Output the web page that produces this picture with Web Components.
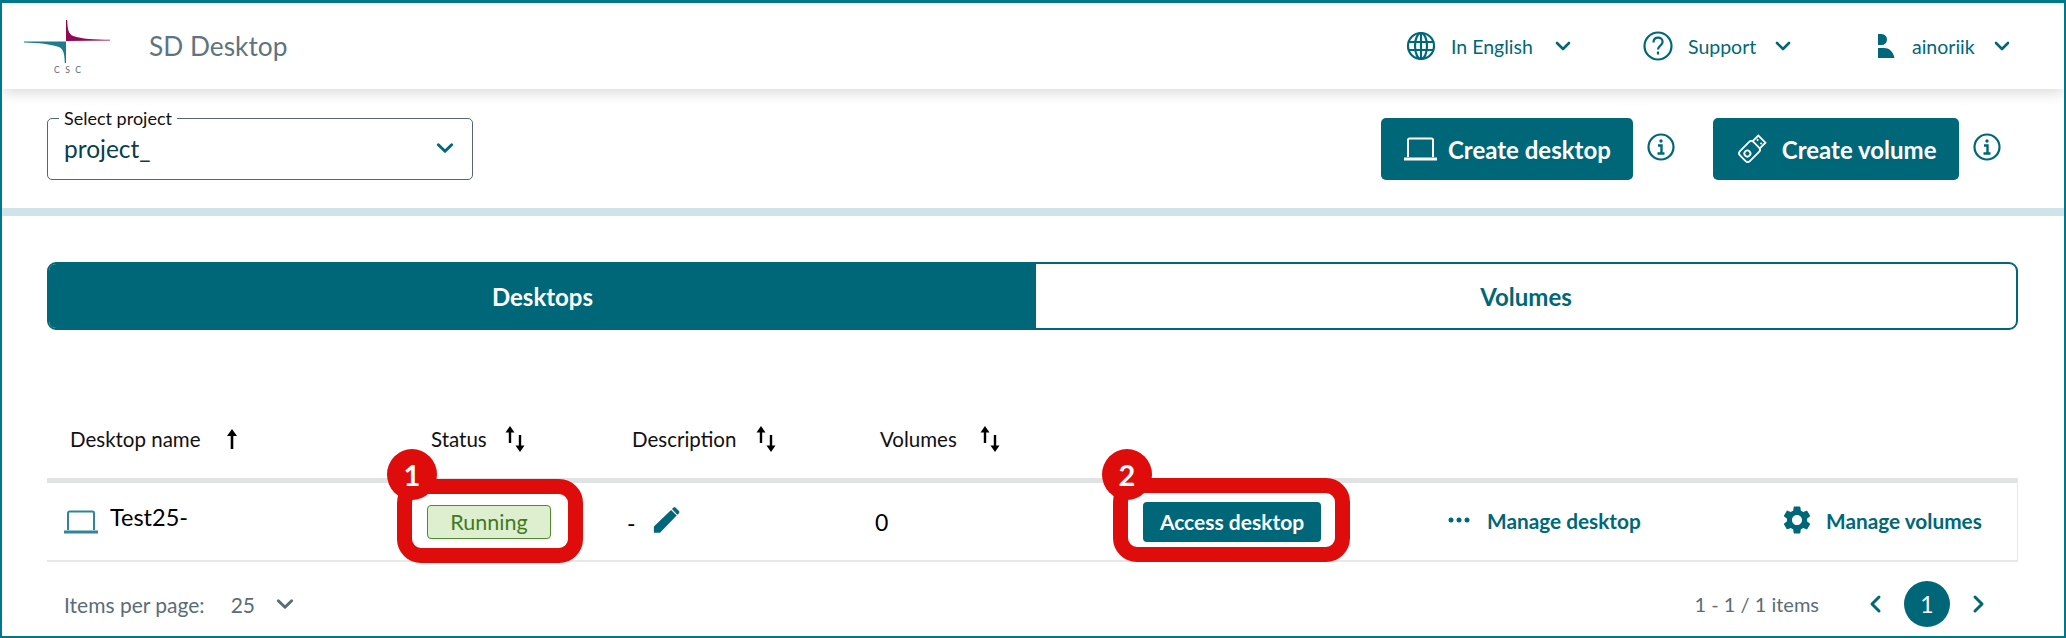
<!DOCTYPE html>
<html lang="en">
<head>
<meta charset="utf-8">
<title>SD Desktop</title>
<style>
    html, body { margin: 0; padding: 0; background: #fff; }
    body { font-family: Lato, "Liberation Sans", sans-serif; }
</style>
</head>
<body>
<sd-frame>
    <sd-header>
        <nav-item width="237" chev="21">
            <svg slot="icon" width="30" height="30" viewBox="0 0 30 30" fill="none" stroke="currentColor" stroke-width="2.2"><circle cx="15" cy="15" r="13"/><ellipse cx="15" cy="15" rx="6" ry="13"/><path d="M15 2v26M2.5 11h25M2.5 19h25"/></svg>
            In English
        </nav-item>
        <nav-item width="235">
            <svg slot="icon" width="30" height="30" viewBox="0 0 30 30" fill="none" stroke="currentColor" stroke-width="2.2"><circle cx="15" cy="15" r="13.5"/><path d="M10.5 11.5c0-3 2-4.800 4.600-4.800s4.500 1.700 4.500 4.200c0 3.600-4.600 3.800-4.600 7.600"/><path d="M15 20.500v3"/></svg>
            Support
        </nav-item>
        <nav-item width="139" gap="17">
            <svg slot="icon" width="17" height="24" viewBox="0 0 17 24" fill="currentColor"><path d="M0 0h3.500a5.500 5.500 0 0 1 0 11H0zM0 14h6c5 0 9 3 10.500 10H0z"/></svg>
            ainoriik
        </nav-item>
    </sd-header>

    <sd-toolbar>
        <project-select label="Select project" value="project_"></project-select>
        <action-button gap="11">
            <svg slot="icon" width="33" height="24" viewBox="0 0 33 24" fill="none" stroke="#fff" stroke-width="2"><path d="M4 20V3a1.500 1.500 0 0 1 1.500-1.500h22A1.500 1.500 0 0 1 29 3v17"/><path d="M0 22h33" stroke-width="3"/></svg>
            Create desktop
        </action-button>
        <info-dot></info-dot>
        <action-button gap="14" style="margin-left:38px">
            <svg slot="icon" width="32" height="34" viewBox="0 0 32 34" fill="none" stroke="#fff" stroke-width="1.800"><g transform="rotate(-45 16 17)"><rect x="3" y="10" width="19" height="14" rx="3"/><path d="M22 12h8v10h-8"/><path d="M25.500 14.500h1.800M25.500 19.500h1.800"/><circle cx="9.500" cy="17" r="3"/></g></svg>
            Create volume
        </action-button>
        <info-dot></info-dot>
    </sd-toolbar>

    <tab-bar></tab-bar>

    <desktop-table>
        <desktop-row>
            <cell-name slot="name">Test25-</cell-name>
            <call-out slot="status" number="1" box-left="-30" box-top="-26" box-width="186" num-left="-40" num-top="-56"><status-badge>Running</status-badge></call-out>
            <cell-description slot="description">-</cell-description>
            <span slot="volumes">0</span>
            <call-out slot="access" number="2" box-left="-30" box-top="-24" box-width="237" num-left="-41" num-top="-53"><access-button>Access desktop</access-button></call-out>
            <row-link slot="manage" kind="dots">Manage desktop</row-link>
            <row-link slot="manage-volumes" kind="gear">Manage volumes</row-link>
        </desktop-row>
    </desktop-table>

    <table-pager></table-pager>
</sd-frame>

<script>
    const chevron = (size, color) => `<svg width="${size}" height="${size}" viewBox="0 0 18 18" fill="none" stroke="${color || "currentColor"}" stroke-width="2.600" stroke-linecap="round" stroke-linejoin="round"><path d="M3 6l6 6 6-6"/></svg>`;

    // shared base: clones the template of the subclass into an open shadow root
    class ShadowElement extends HTMLElement {
        constructor() {
            super();
            const template = document.createElement("template");
            template.innerHTML = this.render();
            this.attachShadow({ mode: "open" }).appendChild(template.content.cloneNode(true));
        }
        render() { return ""; }
    }

    class SdFrame extends ShadowElement {
        render() {
            return `<style>
                :host {
                    display: flex;
                    flex-direction: column;
                    box-sizing: border-box;
                    width: 2066px;
                    height: 638px;
                    overflow: hidden;
                    border: 2px solid #00778a;
                    border-top-width: 3px;
                    background: #fff;
                    color: #000;
                    font-family: Lato, "Liberation Sans", sans-serif;
                }
            </style><slot></slot>`;
        }
    }

    class SdHeader extends ShadowElement {
        render() {
            return `<style>
                :host {
                    display: flex;
                    align-items: center;
                    flex: none;
                    height: 86px;
                    padding-left: 22px;
                    box-shadow: 0 3px 14px rgba(0,0,0,.16);
                    position: relative;
                    z-index: 2;
                    background: #fff;
                }
                svg { flex: none; }
                .logo { margin-top: 8px; }
                .title { margin-left: 39px; font-size: 26.300px; color: #5e7480; flex: 1; }
                .nav { display: flex; align-items: center; padding-right: 47px; }
            </style>
            <svg class="logo" width="86" height="60" viewBox="0 0 86 60">
                <path fill="#8e0a55" d="M42 0h1.200c.4 10 1.400 14 6 16 8 3 21 3.600 36.800 3.800V20.600L42 21z"/>
                <path fill="#1e7b8a" d="M0 21.500h42V43h-1.200c-.4-10-1.400-14-6-16-8-3-20-4.300-34.800-4.600z"/>
                <text x="30" y="53" font-family="Lato, sans-serif" font-size="8.500" letter-spacing="5.500" fill="#667">CSC</text>
            </svg>
            <span class="title">SD Desktop</span>
            <div class="nav"><slot></slot></div>`;
        }
    }

    class NavItem extends ShadowElement {
        render() {
            return `<style>
                :host {
                    display: flex;
                    align-items: center;
                    box-sizing: border-box;
                    width: ${this.getAttribute("width")}px;
                    color: #006778;
                    font-size: 19.500px;
                }
                .text { margin-left: ${this.getAttribute("gap") || 15}px; }
                .chev { display: flex; margin-left: ${this.getAttribute("chev") || 18}px; }
                ::slotted(svg) { flex: none; }
            </style>
            <slot name="icon"></slot><span class="text"><slot></slot></span><span class="chev">${chevron(18)}</span>`;
        }
    }

    class SdToolbar extends ShadowElement {
        render() {
            return `<style>
                :host {
                    display: flex;
                    align-items: flex-start;
                    flex: none;
                    box-sizing: border-box;
                    height: 127px;
                    padding: 29px 0 0 45px;
                    border-bottom: 8px solid #cfe4e8;
                }
            </style>
            <slot></slot>`;
        }
    }

    class ProjectSelect extends ShadowElement {
        render() {
            return `<style>
                :host {
                    display: flex;
                    align-items: center;
                    justify-content: space-between;
                    box-sizing: border-box;
                    flex: none;
                    width: 426px;
                    height: 62px;
                    margin-right: 908px;
                    padding: 0 17px 2px 16px;
                    border: 1.500px solid #54666f;
                    border-radius: 5px;
                    position: relative;
                    color: #0b3f4c;
                    font-size: 24.500px;
                }
                .label {
                    position: absolute;
                    left: 11px;
                    top: -11px;
                    padding: 0 5px;
                    background: #fff;
                    color: #111;
                    font-size: 18px;
                    line-height: 20px;
                }
                svg { color: #006778; }
            </style>
            <span class="label">${this.getAttribute("label")}</span>
            <span>${this.getAttribute("value")}</span>
            ${chevron(20)}`;
        }
    }

    class ActionButton extends ShadowElement {
        render() {
            return `<style>
                :host {
                    display: inline-flex;
                    align-items: center;
                    flex: none;
                    box-sizing: border-box;
                    height: 62px;
                    padding: 0 22px 0 23px;
                    gap: ${this.getAttribute("gap")}px;
                    border-radius: 5px;
                    background: #006778;
                    color: #fff;
                    font-size: 24px;
                    font-weight: 700;
                    white-space: nowrap;
                }
            </style><slot name="icon"></slot><slot></slot>`;
        }
    }

    class InfoDot extends ShadowElement {
        render() {
            return `<style>
                :host { display: flex; flex: none; margin: 15px 0 0 14px; color: #006778; }
            </style>
            <svg width="28" height="28" viewBox="0 0 28 28" fill="none" stroke="currentColor" stroke-width="2.200">
                <circle cx="14" cy="14" r="12.500"/>
                <circle cx="14" cy="8" r="1.700" fill="currentColor" stroke="none"/>
                <path d="M11 12.500h3.500V20M10.500 20.500h7" stroke-width="2.400"/>
            </svg>`;
        }
    }

    class TabBar extends ShadowElement {
        render() {
            return `<style>
                :host {
                    display: grid;
                    grid-template-columns: 987px 1fr;
                    flex: none;
                    box-sizing: border-box;
                    width: 1971px;
                    height: 68px;
                    margin: 46px 0 0 45px;
                    border: 2px solid #006778;
                    border-radius: 9px;
                    overflow: hidden;
                    font-size: 24px;
                    font-weight: 700;
                    color: #006778;
                }
                div { display: flex; align-items: center; justify-content: center; }
                .active { background: #006778; color: #fff; }
            </style>
            <div class="active">Desktops</div><div>Volumes</div>`;
        }
    }

    class DesktopTable extends ShadowElement {
        render() {
            const columns = [["Desktop name", "up", 25], ["Status", "both", 18], ["Description", "both", 20], ["Volumes", "both", 23]];
            const sort = kind => kind === "up"
                ? `<svg width="12" height="22" viewBox="0 0 12 22"><path d="M6 1l5 7H7.300v13H4.700V8H1z"/></svg>`
                : `<svg width="20" height="26" viewBox="0 0 20 26"><path d="M5 0l4.500 6.500H6.200V17H3.800V6.500H.5zM15 26l-4.500-6.500h3.300V9h2.400v10.500h3.300z"/></svg>`;
            return `<style>
                :host {
                    display: block;
                    flex: none;
                    width: 1971px;
                    margin: 87px 0 0 45px;
                }
                .head {
                    display: grid;
                    grid-template-columns: 361px 201px 248px 1fr;
                    align-items: center;
                    height: 43px;
                    padding: 0 0 18px 23px;
                    font-size: 20.500px;
                    color: #111;
                }
                .head div { display: flex; align-items: center; }
                .head svg { flex: none; }
            </style>
            <div class="head">
                ${columns.map(c => `<div style="gap:${c[2]}px">${c[0]}${sort(c[1])}</div>`).join("")}
            </div>
            <slot></slot>`;
        }
    }

    class DesktopRow extends ShadowElement {
        render() {
            return `<style>
                :host {
                    display: grid;
                    grid-template-columns: 380px 200px 248px 268px 305px 335px 1fr;
                    align-items: center;
                    box-sizing: border-box;
                    height: 84px;
                    border-top: 5px solid #e1e2e3;
                    border-bottom: 2px solid #e8e8e8;
                    border-right: 1.500px solid #e8e8e8;
                    font-size: 23px;
                }
                .name { padding-left: 17px; }
            </style>
            <div class="name"><slot name="name"></slot></div>
            <div><slot name="status"></slot></div>
            <div><slot name="description"></slot></div>
            <div><slot name="volumes"></slot></div>
            <div><slot name="access"></slot></div>
            <div><slot name="manage"></slot></div>
            <div><slot name="manage-volumes"></slot></div>`;
        }
    }

    class CellName extends ShadowElement {
        render() {
            return `<style>
                :host { display: flex; align-items: center; gap: 12px; font-size: 23.500px; }
                span { margin-top: -9px; }
            </style>
            <svg width="34" height="24" viewBox="0 0 34 24" fill="none" stroke="#2f8598" stroke-width="2"><path d="M4 20V3a1.500 1.500 0 0 1 1.500-1.500h23A1.500 1.500 0 0 1 30 3v17"/><path d="M0 22h34" stroke-width="3"/></svg>
            <span><slot></slot></span>`;
        }
    }

    class StatusBadge extends ShadowElement {
        render() {
            return `<style>
                :host {
                    display: flex;
                    align-items: center;
                    justify-content: center;
                    box-sizing: border-box;
                    width: 124px;
                    height: 34px;
                    border: 1.500px solid #4f8a2f;
                    border-radius: 4px;
                    background: #deefd0;
                    color: #3f7a1e;
                    font-size: 21.500px;
                }
            </style><slot></slot>`;
        }
    }

    class AccessButton extends ShadowElement {
        render() {
            return `<style>
                :host {
                    display: flex;
                    align-items: center;
                    justify-content: center;
                    width: 178px;
                    height: 40px;
                    border-radius: 4px;
                    background: #006778;
                    color: #fff;
                    font-size: 21px;
                    font-weight: 700;
                }
            </style><slot></slot>`;
        }
    }

    // red highlight drawn over a cell, with a numbered marker on its corner
    class CallOut extends ShadowElement {
        render() {
            return `<style>
                :host { display: inline-block; position: relative; vertical-align: middle; }
                .box {
                    position: absolute;
                    left: ${this.getAttribute("box-left")}px;
                    width: ${this.getAttribute("box-width")}px;
                    top: ${this.getAttribute("box-top")}px;
                    height: 84px;
                    box-sizing: border-box;
                    border: 15px solid #df0c0c;
                    border-radius: 24px;
                    pointer-events: none;
                }
                .num {
                    position: absolute;
                    left: ${this.getAttribute("num-left")}px;
                    top: ${this.getAttribute("num-top")}px;
                    width: 50px;
                    height: 51px;
                    border-radius: 50%;
                    background: #df0c0c;
                    color: #fff;
                    font: 700 29px/51px Lato, sans-serif;
                    text-align: center;
                }
            </style>
            <slot></slot>
            <div class="box"></div>
            <div class="num">${this.getAttribute("number")}</div>`;
        }
    }

    class CellDescription extends ShadowElement {
        render() {
            return `<style>
                :host { display: flex; align-items: center; gap: 14px; font-size: 23px; margin-top: 2px; }
            </style>
            <slot></slot>
            <svg width="30" height="30" viewBox="0 0 27 27" style="margin-top:-4px"><path fill="#00687a" d="M19 3.500l5 5L9 24H3.500v-5.500z"/><path fill="#00687a" d="M21 1.500a1.500 1.500 0 0 1 2.100 0l2.900 2.900a1.500 1.500 0 0 1 0 2.100l-1.300 1.300-5-5z"/></svg>`;
        }
    }

    class RowLink extends ShadowElement {
        render() {
            const gear = `<svg width="28" height="28" viewBox="2.500 2 19 20" fill="#006778"><path d="M19.140 12.940c.040-.300.060-.610.060-.940 0-.320-.020-.640-.070-.940l2.030-1.580c.180-.140.230-.410.120-.610l-1.920-3.320c-.120-.220-.370-.290-.590-.220l-2.390.960c-.500-.380-1.030-.700-1.620-.940l-.360-2.540c-.040-.240-.240-.410-.480-.410h-3.840c-.240 0-.430.170-.470.410l-.360 2.540c-.590.240-1.130.570-1.620.940l-2.390-.960c-.220-.080-.470 0-.590.220L2.740 8.870c-.120.210-.080.470.120.610l2.030 1.580c-.050.300-.090.630-.090.940s.020.640.070.940l-2.030 1.580c-.180.140-.230.410-.120.610l1.920 3.320c.120.220.370.290.590.220l2.390-.960c.500.380 1.030.700 1.620.940l.360 2.540c.050.240.240.410.480.410h3.840c.240 0 .440-.170.470-.410l.360-2.540c.590-.240 1.130-.560 1.620-.940l2.390.960c.220.080.470 0 .590-.220l1.920-3.320c.120-.220.070-.470-.120-.610l-2.010-1.580zM12 15.600c-1.980 0-3.600-1.620-3.600-3.600s1.620-3.600 3.600-3.600 3.600 1.620 3.600 3.600-1.620 3.600-3.600 3.600z"/></svg>`;
            const dots = `<svg width="22" height="6" viewBox="0 0 22 6" fill="#006778"><circle cx="3" cy="3" r="2.500"/><circle cx="11" cy="3" r="2.500"/><circle cx="19" cy="3" r="2.500"/></svg>`;
            const isGear = this.getAttribute("kind") === "gear";
            return `<style>
                :host {
                    display: flex;
                    align-items: center;
                    gap: ${isGear ? 15 : 17}px;
                    margin-top: -3px;
                    color: #006778;
                    font-size: 20.800px;
                    font-weight: 700;
                    white-space: nowrap;
                }
            </style>
            ${isGear ? gear : dots}<slot></slot>`;
        }
    }

    class TablePager extends ShadowElement {
        render() {
            return `<style>
                :host {
                    display: flex;
                    align-items: center;
                    flex: none;
                    box-sizing: border-box;
                    width: 1971px;
                    height: 64px;
                    margin: 10px 0 0 45px;
                    padding: 0 33px 0 17px;
                    color: #5a6d77;
                    font-size: 21px;
                }
                .per { display: flex; align-items: center; }
                .size { margin: 0 20px 0 26px; }
                .range { margin-left: auto; font-size: 20px; }
                .arrow { display: flex; color: #006778; }
                .page {
                    width: 46px;
                    height: 46px;
                    margin: 0 21px;
                    border-radius: 50%;
                    background: #006778;
                    color: #fff;
                    font-size: 23px;
                    line-height: 46px;
                    text-align: center;
                }
                .prev { margin-left: 50px; }
            </style>
            <div class="per"><span>Items per page:</span><span class="size">25</span>${chevron(20, "#5a6d77")}</div>
            <span class="range">1 - 1 / 1 items</span>
            <span class="arrow prev"><svg width="14" height="20" viewBox="0 0 14 20" fill="none" stroke="currentColor" stroke-width="3" stroke-linecap="round" stroke-linejoin="round"><path d="M10 3L3 10l7 7"/></svg></span>
            <span class="page">1</span>
            <span class="arrow"><svg width="14" height="20" viewBox="0 0 14 20" fill="none" stroke="currentColor" stroke-width="3" stroke-linecap="round" stroke-linejoin="round"><path d="M4 3l7 7-7 7"/></svg></span>`;
        }
    }

    customElements.define("sd-frame", SdFrame);
    customElements.define("sd-header", SdHeader);
    customElements.define("nav-item", NavItem);
    customElements.define("sd-toolbar", SdToolbar);
    customElements.define("project-select", ProjectSelect);
    customElements.define("action-button", ActionButton);
    customElements.define("info-dot", InfoDot);
    customElements.define("tab-bar", TabBar);
    customElements.define("desktop-table", DesktopTable);
    customElements.define("desktop-row", DesktopRow);
    customElements.define("cell-name", CellName);
    customElements.define("status-badge", StatusBadge);
    customElements.define("access-button", AccessButton);
    customElements.define("call-out", CallOut);
    customElements.define("cell-description", CellDescription);
    customElements.define("row-link", RowLink);
    customElements.define("table-pager", TablePager);
</script>
</body>
</html>
